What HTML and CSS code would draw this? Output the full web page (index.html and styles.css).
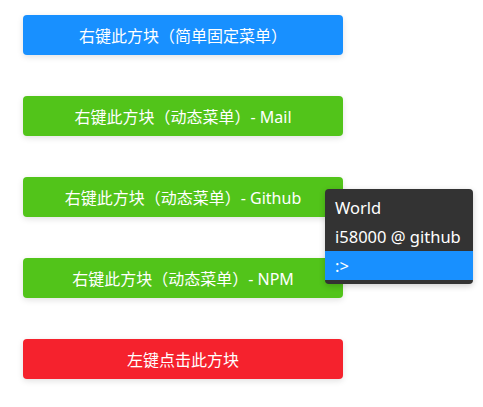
FILE: index.html
```html
<!DOCTYPE html>
<html>
<head>
<meta charset="utf-8">
<link rel="stylesheet" href="styles.css">
</head>
<body>
<div class="page">
  <div class="list">
    <div class="box box-blue">右键此方块（简单固定菜单）</div>
    <div class="box box-green">右键此方块（动态菜单）- Mail</div>
    <div class="box box-green">右键此方块（动态菜单）- Github</div>
    <div class="box box-green">右键此方块（动态菜单）- NPM</div>
    <div class="box box-red">左键点击此方块</div>
  </div>
  <div class="menu">
    <div class="menu-item">World</div>
    <div class="menu-item">i58000 @ github</div>
    <div class="menu-item active">:&gt;</div>
  </div>
</div>
</body>
</html>
```
FILE: styles.css
```css
html, body {
  margin: 0;
  padding: 0;
  background: #fff;
}
body {
  font-family: "Noto Sans", "Noto Sans CJK SC", sans-serif;
  font-size: 16px;
}
.page {
  position: relative;
  width: 483px;
  height: 407px;
}
.list {
  display: flex;
  flex-direction: column;
  gap: 41px;
  padding: 15px 0 0 23px;
}
.box {
  width: 320px;
  height: 40px;
  border-radius: 4px;
  color: #fff;
  display: flex;
  align-items: center;
  justify-content: center;
  box-shadow: 0 2px 6px rgba(0, 0, 0, 0.12);
}
.box-blue { background: #1890ff; }
.box-green { background: #52c41a; }
.box-red { background: #f5222d; }
.menu {
  position: absolute;
  left: 325px;
  top: 189px;
  width: 148px;
  padding: 4px 0;
  background: #333;
  border-radius: 4px;
  color: #fff;
  font-size: 16.5px;
  box-shadow: 0 2px 6px rgba(0, 0, 0, 0.2);
}
.menu-item {
  height: 29px;
  line-height: 29px;
  padding: 0 10px;
  white-space: nowrap;
}
.menu-item.active {
  background: #1890ff;
}
```
